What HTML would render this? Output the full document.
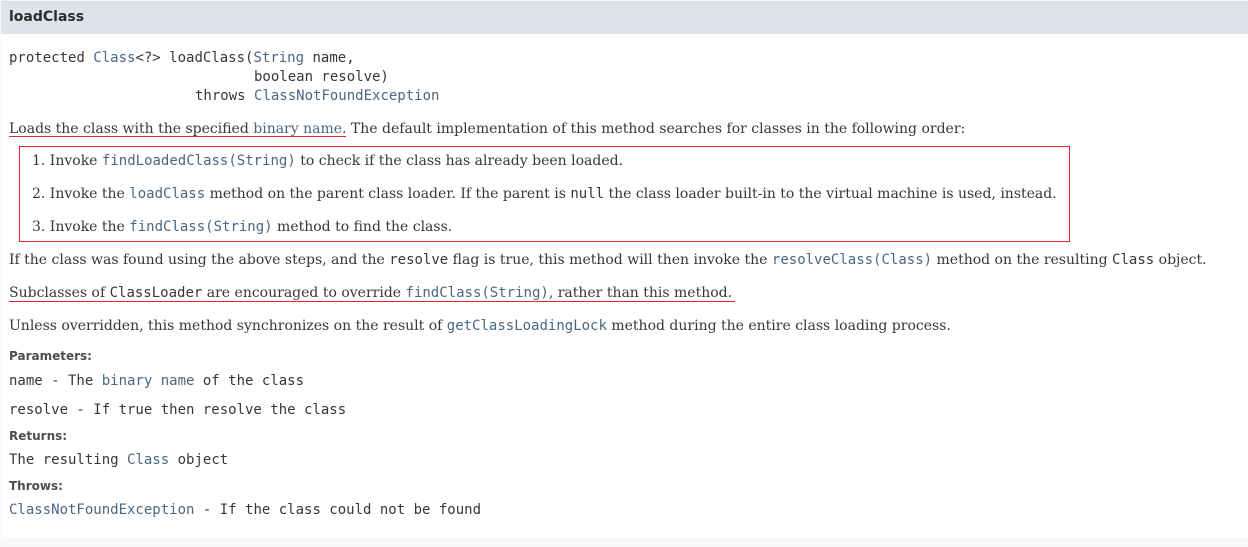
<!DOCTYPE html>
<html><head><meta charset="utf-8"><style>
body{margin:0;width:1248px;height:547px;background:#f8f8f8;position:relative;overflow:hidden;color:#353833}
.hd{position:absolute;left:1px;top:1px;width:1247px;height:32px;background:#dee3e9;border-bottom:1px solid #d0d5db;border-top:1px solid #d8dde3}
.hd span{position:absolute;left:8px;top:7px;font:bold 14px "DejaVu Sans","Liberation Sans",sans-serif;color:#2c2c2c}
.ct{position:absolute;left:1px;top:34px;width:1247px;height:503px;background:#fff}
.l{position:absolute;white-space:pre;line-height:18px}
.m{font-family:"DejaVu Sans Mono","Liberation Mono",monospace;font-size:14px}
.s{font-family:"DejaVu Serif","Liberation Serif",serif;font-size:14px}
.c{font-family:"DejaVu Sans Mono","Liberation Mono",monospace;font-size:14px}
.a{color:#4a6782}
.b{font:bold 12px "DejaVu Sans","Liberation Sans",sans-serif;color:#4e4e4e}
.r{position:absolute;background:#e8242d}
</style></head><body>
<div class="hd"><span>loadClass</span></div>
<div class="ct"></div>
<div class="l m" style="left:9px;top:49px">protected <span class="a">Class</span>&lt;?&gt; loadClass(<span class="a">String</span> name,</div>
<div class="l m" style="left:254px;top:68px">boolean resolve)</div>
<div class="l m" style="left:195px;top:87px">throws <span class="a">ClassNotFoundException</span></div>
<div class="l s" style="left:9px;top:120px"><span>Loads the class with the specified </span><span class="a">binary name</span>. The default implementation of this method searches for classes in the following order:</div>
<div class="r" style="left:9px;top:136px;width:337px;height:1px"></div>
<div style="position:absolute;left:19px;top:146px;width:1049px;height:94px;border:1px solid #e8242d"></div>
<div class="l s" style="left:32px;top:152px">1. Invoke <span class="c a">findLoadedClass(String)</span> to check if the class has already been loaded.</div>
<div class="l s" style="left:32px;top:185px">2. Invoke the <span class="c a">loadClass</span> method on the parent class loader. If the parent is <span class="c">null</span> the class loader built-in to the virtual machine is used, instead.</div>
<div class="l s" style="left:32px;top:218px">3. Invoke the <span class="c a">findClass(String)</span> method to find the class.</div>
<div class="l s" style="left:9px;top:251px">If the class was found using the above steps, and the <span class="c">resolve</span> flag is true, this method will then invoke the <span class="c a">resolveClass(Class)</span> method on the resulting <span class="c">Class</span> object.</div>
<div class="l s" style="left:9px;top:284px">Subclasses of <span class="c">ClassLoader</span> are encouraged to override <span class="c a">findClass(String)</span>, rather than this method.</div>
<div class="r" style="left:9px;top:301px;width:726px;height:1px"></div>
<div class="l s" style="left:9px;top:317px">Unless overridden, this method synchronizes on the result of <span class="c a">getClassLoadingLock</span> method during the entire class loading process.</div>
<div class="l b" style="left:9px;top:349px">Parameters:</div>
<div class="l m" style="left:9px;top:372px">name - The <span class="a">binary name</span> of the class</div>
<div class="l m" style="left:9px;top:401px">resolve - If true then resolve the class</div>
<div class="l b" style="left:9px;top:429px">Returns:</div>
<div class="l m" style="left:9px;top:451px">The resulting <span class="a">Class</span> object</div>
<div class="l b" style="left:9px;top:479px">Throws:</div>
<div class="l m" style="left:9px;top:501px"><span class="a">ClassNotFoundException</span> - If the class could not be found</div>
</body></html>
